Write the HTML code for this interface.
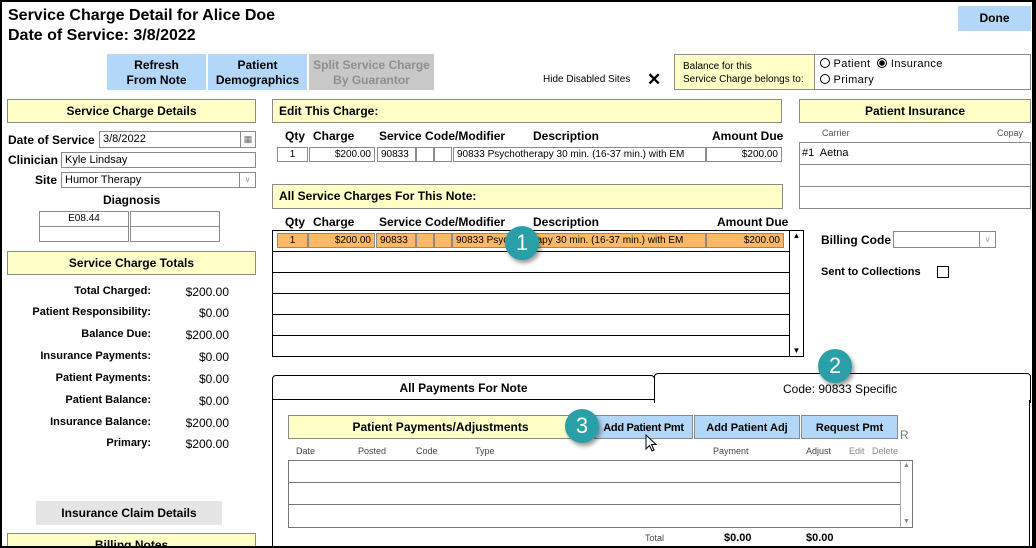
<!DOCTYPE html>
<html style="width:1036px;height:548px;overflow:hidden"><head><meta charset="utf-8"><style>
*{box-sizing:border-box;margin:0;padding:0}
body{width:1036px;height:548px;overflow:hidden;background:#fff;font-family:"Liberation Sans",Arial,sans-serif;color:#000;position:relative}
.a{position:absolute}
.frame{left:0;top:0;width:1036px;height:548px;border:2px solid #000;border-right-width:4px;z-index:50;pointer-events:none}
.hdr{position:absolute;background:#ffffc8;border:1px solid #8a8a8a;font-weight:bold;font-size:12px;line-height:22px}
.c{text-align:center}
.btn{position:absolute;background:#b3d7f8;font-weight:bold;font-size:12px;text-align:center}
.inp{position:absolute;border:1px solid #8a8a8a;background:#fff;font-size:11px;line-height:14px;padding-left:3px}
.cell{position:absolute;border:1px solid #8a8a8a;font-size:10px;line-height:13px;padding:0 3px;overflow:hidden;white-space:nowrap}
.b12{font-weight:bold;font-size:12px}
.lbl{position:absolute;font-weight:bold;font-size:11px;text-align:right;width:151px;left:0}
.val{position:absolute;font-size:12px;text-align:right;width:229px;left:0}
.badge{position:absolute;width:34px;height:34px;border-radius:50%;background:#2a9fa8;color:#fff;font-size:22px;line-height:34px;text-align:center;box-shadow:2px 3px 4px rgba(0,0,0,.4);z-index:20}
.row{position:absolute;left:0;right:14px;border-bottom:1.5px solid #000;height:21px}
.n{font-family:"Liberation Sans Narrow","Liberation Sans",Arial,sans-serif}
</style></head><body>
<div class="a frame"></div>

<div class="a" style="left:8px;top:6px;font-size:16px;font-weight:bold;line-height:20px">Service Charge Detail for Alice Doe<br>Date of Service: 3/8/2022</div>

<div class="btn" style="left:107px;top:54px;width:99px;height:36px;line-height:15px;padding-top:4px">Refresh<br>From Note</div>
<div class="btn" style="left:208px;top:54px;width:99px;height:36px;line-height:15px;padding-top:4px">Patient<br>Demographics</div>
<div class="btn" style="left:309px;top:54px;width:125px;height:36px;line-height:15px;padding-top:4px;background:#c8c8c8;color:#8f8f8f">Split Service Charge<br>By Guarantor</div>
<div class="btn" style="left:958px;top:6px;width:73px;height:25px;line-height:25px">Done</div>

<div class="a" style="left:543px;top:74px;font-size:10px">Hide Disabled Sites</div>
<div class="a" style="left:647px;top:70px;font-size:17px;font-weight:bold;line-height:20px">✕</div>

<div class="a" style="left:674px;top:54px;width:141px;height:36px;background:#ffffc8;border:1px solid #8a8a8a;font-size:10px;line-height:13px;padding:5px 0 0 8px">Balance for this<br>Service Charge belongs to:</div>
<div class="a" style="left:814px;top:54px;width:217px;height:36px;border:1px solid #8a8a8a;font-size:11px;line-height:16px;padding:1px 0 0 5px;letter-spacing:0.4px">
<span style="display:inline-block;width:10px;height:10px;border:1px solid #000;border-radius:50%;vertical-align:-1px"></span> Patient &nbsp;<span style="display:inline-block;width:10px;height:10px;border:1px solid #000;border-radius:50%;vertical-align:-1px;background:radial-gradient(#000 2.5px,#fff 3px)"></span> Insurance<br>
<span style="display:inline-block;width:10px;height:10px;border:1px solid #000;border-radius:50%;vertical-align:-1px"></span> Primary</div>

<!-- left column -->
<div class="hdr c" style="left:7px;top:99px;width:249px;height:24px">Service Charge Details</div>
<div class="a b12" style="left:8px;top:133px">Date of Service</div>
<div class="inp" style="left:99px;top:131px;width:157px;height:17px">3/8/2022<span style="position:absolute;right:0;top:0;width:15px;height:15px;border-left:1px solid #8a8a8a;font-size:9px;text-align:center;color:#666">▦</span></div>
<div class="a b12" style="left:8px;top:153px">Clinician</div>
<div class="inp" style="left:61px;top:152px;width:195px;height:16px">Kyle Lindsay</div>
<div class="a b12" style="left:35px;top:173px">Site</div>
<div class="inp" style="left:61px;top:172px;width:195px;height:16px">Humor Therapy<span style="position:absolute;right:0;top:0;width:16px;height:14px;border-left:1px solid #8a8a8a;font-size:8px;text-align:center;color:#999">∨</span></div>
<div class="a b12" style="left:103px;top:193px">Diagnosis</div>
<div class="cell c" style="left:39px;top:211px;width:90px;height:16px">E08.44</div>
<div class="cell" style="left:130px;top:211px;width:90px;height:16px"></div>
<div class="cell" style="left:39px;top:226px;width:90px;height:16px"></div>
<div class="cell" style="left:130px;top:226px;width:90px;height:16px"></div>
<div class="hdr c" style="left:7px;top:251px;width:249px;height:24px">Service Charge Totals</div>

<div class="lbl" style="top:285px">Total Charged:</div><div class="val" style="top:285px">$200.00</div>
<div class="lbl" style="top:306px">Patient Responsibility:</div><div class="val" style="top:306px">$0.00</div>
<div class="lbl" style="top:328px">Balance Due:</div><div class="val" style="top:328px">$200.00</div>
<div class="lbl" style="top:350px">Insurance Payments:</div><div class="val" style="top:350px">$0.00</div>
<div class="lbl" style="top:372px">Patient Payments:</div><div class="val" style="top:372px">$0.00</div>
<div class="lbl" style="top:394px">Patient Balance:</div><div class="val" style="top:394px">$0.00</div>
<div class="lbl" style="top:416px">Insurance Balance:</div><div class="val" style="top:416px">$200.00</div>
<div class="lbl" style="top:437px">Primary:</div><div class="val" style="top:437px">$200.00</div>

<div class="a c b12" style="left:36px;top:501px;width:186px;height:24px;line-height:24px;background:#e5e5e5">Insurance Claim Details</div>
<div class="hdr c" style="left:7px;top:533px;width:249px;height:24px">Billing Notes</div>

<!-- middle -->
<div class="hdr" style="left:272px;top:99px;width:510px;height:24px;padding-left:6px">Edit This Charge:</div>
<div class="a b12" style="left:285px;top:129px">Qty</div><div class="a b12" style="left:313px;top:129px">Charge</div><div class="a b12" style="left:379px;top:129px">Service Code/Modifier</div><div class="a b12" style="left:533px;top:129px">Description</div><div class="a b12" style="left:712px;top:129px">Amount Due</div>
<div class="cell c" style="left:277px;top:147px;width:31px;height:15px">1</div>
<div class="cell" style="left:309px;top:147px;width:66px;height:15px;text-align:right">$200.00</div>
<div class="cell" style="left:377px;top:147px;width:39px;height:15px">90833</div>
<div class="cell" style="left:416px;top:147px;width:18px;height:15px"></div>
<div class="cell" style="left:434px;top:147px;width:18px;height:15px"></div>
<div class="cell" style="left:453px;top:147px;width:253px;height:15px">90833 Psychotherapy 30 min. (16-37 min.) with EM</div>
<div class="cell" style="left:706px;top:147px;width:76px;height:15px;text-align:right">$200.00</div>

<div class="hdr" style="left:272px;top:184px;width:511px;height:25px;padding-left:6px">All Service Charges For This Note:</div>
<div class="a b12" style="left:285px;top:215px">Qty</div><div class="a b12" style="left:313px;top:215px">Charge</div><div class="a b12" style="left:379px;top:215px">Service Code/Modifier</div><div class="a b12" style="left:533px;top:215px">Description</div><div class="a b12" style="left:717px;top:215px">Amount Due</div>

<div class="a" style="left:272px;top:230px;width:532px;height:127px;border:1.5px solid #000">
 <div class="row" style="top:0"></div><div class="row" style="top:21px"></div><div class="row" style="top:42px"></div><div class="row" style="top:63px"></div><div class="row" style="top:84px"></div>
 <div class="a" style="right:0;top:0;width:14px;height:100%;border-left:1.5px solid #000;font-size:8px;text-align:center"><div style="line-height:10px">▲</div><div style="position:absolute;bottom:0;width:100%;line-height:10px">▼</div></div>
</div>
<div class="cell c" style="left:277px;top:233px;width:31px;height:15px;background:#ffb866">1</div>
<div class="cell" style="left:308px;top:233px;width:67px;height:15px;text-align:right;background:#ffb866">$200.00</div>
<div class="cell" style="left:376px;top:233px;width:40px;height:15px;background:#ffb866">90833</div>
<div class="cell" style="left:416px;top:233px;width:18px;height:15px;background:#ffb866"></div>
<div class="cell" style="left:434px;top:233px;width:18px;height:15px;background:#ffb866"></div>
<div class="cell" style="left:452px;top:233px;width:254px;height:15px;background:#ffb866">90833 Psychotherapy 30 min. (16-37 min.) with EM</div>
<div class="cell" style="left:706px;top:233px;width:78px;height:15px;text-align:right;background:#ffb866">$200.00</div>
<div class="badge" style="left:505px;top:226px">1</div>

<!-- right -->
<div class="hdr c" style="left:799px;top:99px;width:232px;height:24px">Patient Insurance</div>
<div class="a" style="left:822px;top:128px;font-size:9px;color:#555">Carrier</div>
<div class="a" style="left:997px;top:128px;font-size:9px;color:#555">Copay</div>
<div class="a" style="left:799px;top:142px;width:232px;height:67px;border:1px solid #8a8a8a">
 <div style="height:22px;border-bottom:1px solid #8a8a8a;font-size:11px;line-height:20px;padding-left:2px">#1&nbsp; Aetna</div>
 <div style="height:22px;border-bottom:1px solid #8a8a8a"></div>
</div>
<div class="a b12" style="left:821px;top:233px">Billing Code</div>
<div class="inp" style="left:893px;top:231px;width:103px;height:17px"><span style="position:absolute;right:0;top:0;width:16px;height:15px;border-left:1px solid #8a8a8a;font-size:8px;text-align:center;color:#999;line-height:15px">∨</span></div>
<div class="a" style="left:821px;top:266px;font-weight:bold;font-size:11px">Sent to Collections</div>
<div class="a" style="left:937px;top:266px;width:12px;height:12px;border:1px solid #000"></div>

<!-- tabs -->
<div class="a" style="left:654px;top:373px;width:377px;height:30px;border:1.5px solid #000;border-bottom:none;border-radius:4px 4px 0 0"></div>
<div class="a" style="left:1029px;top:400px;width:2px;height:150px;border-left:1.5px solid #000"></div>
<div class="a" style="left:658px;top:386px;width:371px;height:30px;background:#fff"></div>
<div class="a" style="left:272px;top:398px;width:2px;height:160px;border-left:1.5px solid #000"></div>
<div class="a c" style="left:272px;top:375px;width:383px;height:25px;border:1.5px solid #000;border-radius:4px 4px 0 0;background:#fff;font-size:12px;font-weight:bold;line-height:24px">All Payments For Note</div>
<div class="a n" style="left:783px;top:382px;font-size:12px">Code: 90833 Specific</div>
<div class="badge" style="left:818px;top:349px">2</div>

<div class="hdr c n" style="left:288px;top:415px;width:305px;height:24px">Patient Payments/Adjustments</div>
<div class="btn n" style="left:594px;top:415px;width:99px;height:24px;line-height:24px;font-size:11px;border:1px solid #8a8a8a;letter-spacing:-0.3px">Add Patient Pmt</div>
<div class="btn n" style="left:694px;top:415px;width:106px;height:24px;line-height:24px;font-size:11px;border:1px solid #8a8a8a">Add Patient Adj</div>
<div class="btn n" style="left:801px;top:415px;width:97px;height:24px;line-height:24px;font-size:11px;border:1px solid #8a8a8a">Request Pmt</div>
<div class="a" style="left:900px;top:428px;font-size:12px;color:#777">R</div>
<div class="badge" style="left:565px;top:409px">3</div>
<svg class="a" style="left:645px;top:434px;z-index:21" width="12" height="20" viewBox="0 0 12 20"><path d="M1 1 L1 15 L4.5 11.5 L7 17 L9 16 L6.5 10.5 L11 10.5 Z" fill="#fff" stroke="#000" stroke-width="1"/></svg>

<div class="a n" style="left:296px;top:446px;font-size:9px;color:#444">Date</div>
<div class="a n" style="left:358px;top:446px;font-size:9px;color:#444">Posted</div>
<div class="a n" style="left:416px;top:446px;font-size:9px;color:#444">Code</div>
<div class="a n" style="left:475px;top:446px;font-size:9px;color:#444">Type</div>
<div class="a n" style="left:713px;top:446px;font-size:9px;color:#444">Payment</div>
<div class="a n" style="left:806px;top:446px;font-size:9px;color:#444">Adjust</div>
<div class="a n" style="left:849px;top:446px;font-size:9px;color:#888">Edit</div>
<div class="a n" style="left:872px;top:446px;font-size:9px;color:#888">Delete</div>
<div class="a" style="left:288px;top:460px;width:625px;height:68px;border:1px solid #777">
 <div style="height:22px;border-bottom:1px solid #777;margin-right:12px"></div>
 <div style="height:22px;border-bottom:1px solid #777;margin-right:12px"></div>
 <div class="a" style="right:0;top:0;width:12px;height:66px;border-left:1px solid #aaa;font-size:7px;color:#888;text-align:center"><div style="line-height:10px">▲</div><div style="position:absolute;bottom:0;width:100%;line-height:10px">▼</div></div>
</div>
<div class="a n" style="left:645px;top:533px;font-size:9px;color:#444">Total</div>
<div class="a n" style="left:724px;top:532px;font-size:11px;font-weight:bold">$0.00</div>
<div class="a n" style="left:806px;top:532px;font-size:11px;font-weight:bold">$0.00</div>
</body></html>
